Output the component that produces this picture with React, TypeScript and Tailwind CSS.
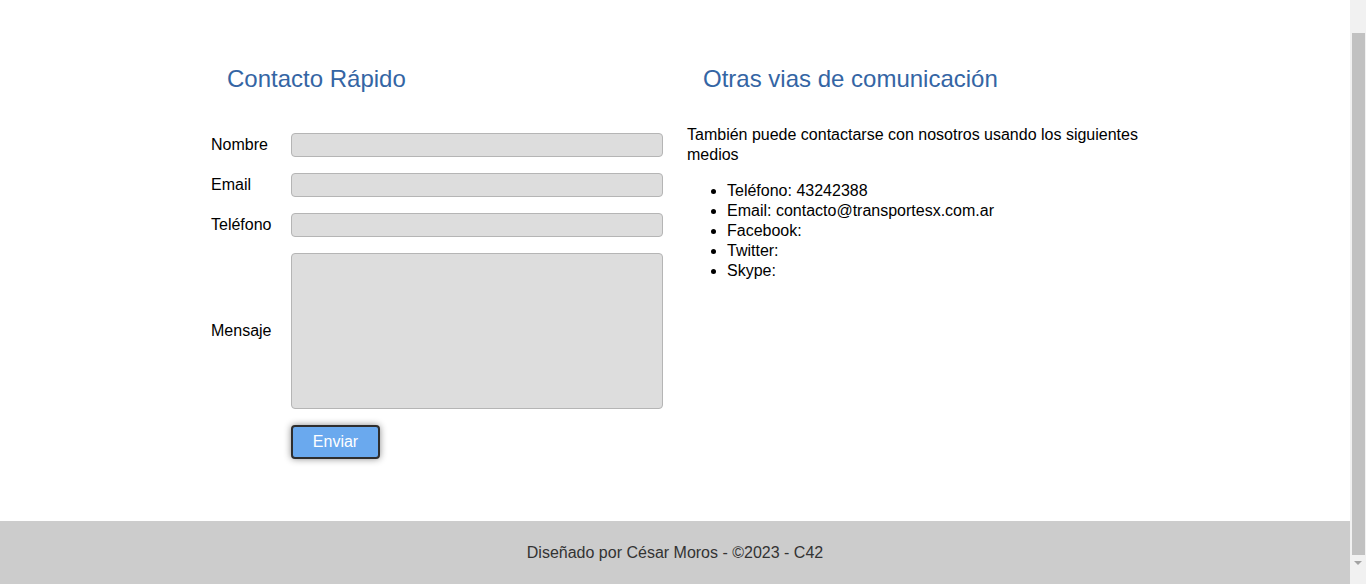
export default function App() {
  const fields = ['Nombre', 'Email', 'Teléfono'];
  const medios = [
    'Teléfono: 43242388',
    'Email: contacto@transportesx.com.ar',
    'Facebook:',
    'Twitter:',
    'Skype:',
  ];

  return (
    <div className="h-screen flex overflow-hidden bg-white text-black font-['Liberation_Sans',Arial,sans-serif] text-base">
      <div className="flex-1 flex flex-col">
        <main className="flex-1 pt-[65px]">
          <div className="w-[952px] mx-auto grid grid-cols-2">
            <section className="px-3">
              <h2 className="pl-4 text-2xl leading-7 text-[#3465a4]">Contacto Rápido</h2>
              <form className="mt-10 flex flex-col gap-4" onSubmit={(e) => e.preventDefault()}>
                {fields.map((f) => (
                  <div key={f} className="flex items-center">
                    <label className="w-20 shrink-0 leading-5">{f}</label>
                    <input
                      type="text"
                      className="w-[372px] h-6 bg-[#dddddd] border border-[#b5b5b5] rounded"
                    />
                  </div>
                ))}
                <div className="flex items-center">
                  <label className="w-20 shrink-0 leading-5">Mensaje</label>
                  <textarea className="w-[372px] h-[156px] bg-[#dddddd] border border-[#b5b5b5] rounded resize-none" />
                </div>
                <div className="pl-20">
                  <button
                    type="submit"
                    className="w-[89px] h-[34px] bg-[#6aa9ee] text-white border-2 border-[#2e2e2e] rounded shadow-[0_0_7px_rgba(0,0,0,0.45)]"
                  >
                    Enviar
                  </button>
                </div>
              </form>
            </section>

            <section className="px-3">
              <h2 className="pl-4 text-2xl leading-7 text-[#3465a4]">Otras vias de comunicación</h2>
              <p className="mt-8 leading-5 w-[452px]">
                También puede contactarse con nosotros usando los siguientes medios
              </p>
              <ul className="mt-4 pl-10 list-disc leading-5">
                {medios.map((m) => (
                  <li key={m}>{m}</li>
                ))}
              </ul>
            </section>
          </div>
        </main>
        <footer className="h-[63px] shrink-0 bg-[#cccccc] flex items-center justify-center text-[#333333]">
          Diseñado por César Moros - ©2023 - C42
        </footer>
      </div>

      {/* browser scrollbar, scrolled to the bottom */}
      <div className="w-4 shrink-0 bg-[#f1f1f1] flex flex-col items-center pt-[33px] pb-[18px]">
        <div className="w-[13px] flex-1 bg-[#c1c1c1]" />
        <svg width="8" height="5" viewBox="0 0 8 5" className="mt-[6px]">
          <path d="M0 0h8L4 4z" fill="#a3a3a3" />
        </svg>
      </div>
    </div>
  );
}
